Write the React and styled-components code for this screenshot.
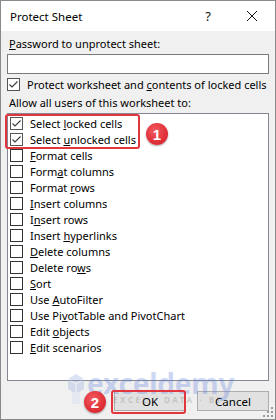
import React from "react";
import styled, { createGlobalStyle, css } from "styled-components";

const Global = createGlobalStyle`
  html, body { margin: 0; padding: 0; background: #fff; }
  body { font-family: "Noto Sans", "Open Sans", Arial, sans-serif; font-size: 11px; color: #000; }
  * { box-sizing: border-box; }
`;

const Window = styled.div`
  position: relative;
  width: 276px;
  height: 420px;
  border: 1px solid #8a8a8a;
  background: #f0f0f0;
  display: flex;
  flex-direction: column;
  overflow: hidden;
`;

const TitleBar = styled.div`
  height: 30px;
  background: #fff;
  display: flex;
  align-items: center;
  padding-left: 9px;
`;

const Title = styled.div`
  flex: 1;
  font-size: 11.5px;
  padding-top: 1px;
`;

const TitleButton = styled.div`
  width: ${(p) => p.$w}px;
  height: 30px;
  display: flex;
  align-items: center;
  justify-content: center;
  font-size: 13px;
  color: #111;
`;

const Body = styled.div`
  flex: 1;
  display: flex;
  flex-direction: column;
  padding: 0 6px;
`;

const Label = styled.div`
  height: 16px;
  line-height: 16px;
  margin-top: ${(p) => p.$mt}px;
  padding-left: 2px;
  white-space: nowrap;
`;

const Input = styled.div`
  margin-top: 2px;
  height: 20px;
  background: #fff;
  border: 1px solid #7a7a7a;
`;

const CheckRow = styled.div`
  display: flex;
  align-items: center;
  height: 16px;
  margin-top: ${(p) => p.$mt || 0}px;
  padding-left: ${(p) => p.$pl || 0}px;
  gap: ${(p) => p.$gap}px;
  white-space: nowrap;
`;

const Box = styled.span`
  flex: none;
  width: 13px;
  height: 13px;
  border: 1px solid #333;
  background: #fff;
  display: flex;
  align-items: center;
  justify-content: center;
  ${(p) =>
    p.$checked &&
    css`
      border-color: #555;
    `}
`;

const ListBox = styled.div`
  margin-top: 2px;
  height: 268px;
  background: #fff;
  border: 1px solid #828790;
  padding: 1px 0 0 1px;
  display: flex;
  flex-direction: column;
`;

const Buttons = styled.div`
  margin-top: 10px;
  display: flex;
  justify-content: flex-end;
  gap: 11px;
`;

const Button = styled.div`
  width: 72px;
  height: 20px;
  border: 1px solid #adadad;
  background: #e1e1e1;
  display: flex;
  align-items: center;
  justify-content: center;
  font-size: 11.5px;
`;

const Highlight = styled.div`
  position: absolute;
  left: ${(p) => p.$x}px;
  top: ${(p) => p.$y}px;
  width: ${(p) => p.$w}px;
  height: ${(p) => p.$h}px;
  border: 2px solid #e3353d;
  border-radius: 3px;
  pointer-events: none;
`;

const Badge = styled.div`
  position: absolute;
  left: ${(p) => p.$x - 11}px;
  top: ${(p) => p.$y - 11}px;
  width: 22px;
  height: 22px;
  border-radius: 50%;
  background: radial-gradient(circle at 40% 35%, #f25a5f 0%, #e2323a 55%, #c8222a 100%);
  box-shadow: 0 1px 2px rgba(0, 0, 0, 0.35);
  color: #fff;
  font-family: "Liberation Sans", Arial, sans-serif;
  font-weight: bold;
  font-size: 15px;
  display: flex;
  align-items: center;
  justify-content: center;
`;

const Watermark = styled.div`
  position: absolute;
  left: 66px;
  top: 371px;
  display: flex;
  align-items: flex-start;
  gap: 2px;
  pointer-events: none;
`;

const WmText = styled.div`
  display: flex;
  flex-direction: column;
`;

const WmBrand = styled.div`
  font-family: "Noto Sans", sans-serif;
  font-weight: bold;
  font-size: 28px;
  line-height: 22px;
  color: rgba(100, 130, 220, 0.33);
  letter-spacing: -0.2px;
`;

const WmTag = styled.div`
  font-family: "Noto Sans", sans-serif;
  font-weight: bold;
  font-size: 8px;
  line-height: 9px;
  letter-spacing: 2.6px;
  color: rgba(120, 120, 120, 0.3);
  padding: 1px 0 0 26px;
`;

const Grip = styled.svg`
  position: absolute;
  right: 2px;
  bottom: 2px;
`;

const Check = () => (
  <svg width="11" height="11" viewBox="0 0 11 11">
    <path d="M1.5 5.5 L4 8 L9.5 2.5" fill="none" stroke="#3a3a3a" strokeWidth="1.1" />
  </svg>
);

const CheckBox = ({ checked }) => <Box $checked={checked}>{checked && <Check />}</Box>;

const Acc = ({ text, k }) => {
  if (k == null) return text;
  return (
    <>
      {text.slice(0, k)}
      <u>{text[k]}</u>
      {text.slice(k + 1)}
    </>
  );
};

const items = [
  ["Select locked cells", 7, true],
  ["Select unlocked cells", 7, true],
  ["Format cells", 0, false],
  ["Format columns", 4, false],
  ["Format rows", 7, false],
  ["Insert columns", 0, false],
  ["Insert rows", 1, false],
  ["Insert hyperlinks", 7, false],
  ["Delete columns", 0, false],
  ["Delete rows", 9, false],
  ["Sort", 0, false],
  ["Use AutoFilter", 4, false],
  ["Use PivotTable and PivotChart", 6, false],
  ["Edit objects", 5, false],
  ["Edit scenarios", 0, false],
];

export default function App() {
  return (
    <>
      <Global />
      <Window>
        <TitleBar>
          <Title>Protect Sheet</Title>
          <TitleButton $w={42}>?</TitleButton>
          <TitleButton $w={46}>
            <svg width="12" height="12" viewBox="0 0 12 12">
              <path d="M1 1 L11 11 M11 1 L1 11" stroke="#111" strokeWidth="1" />
            </svg>
          </TitleButton>
        </TitleBar>
        <Body>
          <Label $mt={5}>
            <Acc text="Password to unprotect sheet:" k={0} />
          </Label>
          <Input />
          <CheckRow $mt={2} $gap={7}>
            <CheckBox checked />
            <span>
              <Acc text="Protect worksheet and contents of locked cells" k={22} />
            </span>
          </CheckRow>
          <Label $mt={3}>Allow all users of this worksheet to:</Label>
          <ListBox>
            {items.map(([t, k, c]) => (
              <CheckRow key={t} $pl={1} $gap={7}>
                <CheckBox checked={c} />
                <span>
                  <Acc text={t} k={k} />
                </span>
              </CheckRow>
            ))}
          </ListBox>
          <Buttons>
            <Button>OK</Button>
            <Button>Cancel</Button>
          </Buttons>
        </Body>

        <Watermark>
          <svg width="18" height="34" viewBox="0 0 18 34">
            <g opacity="0.3">
              <path d="M9 2 L17 7 L17 17 L9 22 L1 17 L1 7 Z" fill="#8fa6e0" />
              <path d="M9 12 L17 7 M9 12 L1 7 M9 12 L9 22" stroke="#fff" strokeWidth="1" />
              <path d="M5 20 L13 20 L13 32 L5 32 Z" fill="#c9d3ee" />
            </g>
          </svg>
          <WmText>
            <WmBrand>exceldemy</WmBrand>
            <WmTag>EXCEL · DATA · BI</WmTag>
          </WmText>
        </Watermark>

        <Highlight $x={4} $y={113} $w={135} $h={35} />
        <Badge $x={156} $y={133}>1</Badge>
        <Highlight $x={110} $y={389} $w={75} $h={24} />
        <Badge $x={94} $y={401}>2</Badge>

        <Grip width="10" height="10" viewBox="0 0 10 10">
          <g fill="#9a9a9a">
            <rect x="8" y="0" width="2" height="2" />
            <rect x="4" y="4" width="2" height="2" />
            <rect x="8" y="4" width="2" height="2" />
            <rect x="0" y="8" width="2" height="2" />
            <rect x="4" y="8" width="2" height="2" />
            <rect x="8" y="8" width="2" height="2" />
          </g>
        </Grip>
      </Window>
    </>
  );
}
